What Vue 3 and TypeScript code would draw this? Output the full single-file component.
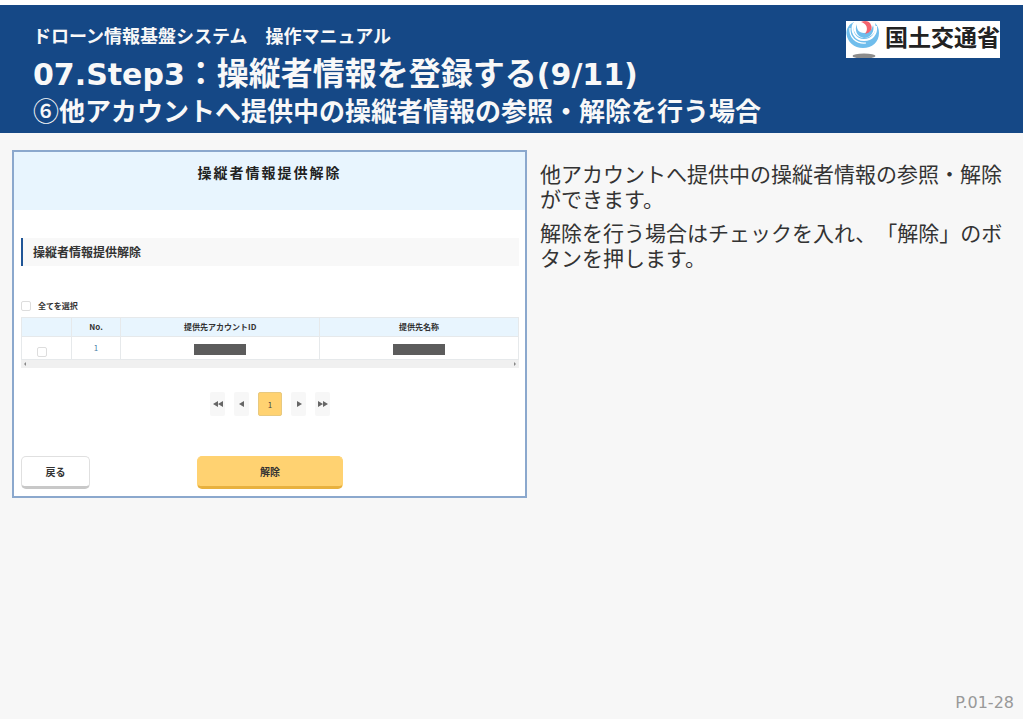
<script setup lang="ts">
import { computed, ref } from 'vue'

interface Recipient {
  no: number
  selected: boolean
}

const recipients = ref<Recipient[]>([{ no: 1, selected: false }])

const allSelected = computed<boolean>({
  get: () => recipients.value.every((r) => r.selected),
  set: (value) => recipients.value.forEach((r) => (r.selected = value)),
})
</script>

<template>
  <div class="slide">
    <header class="banner">
      <div class="headings">
        <p class="manual">ドローン情報基盤システム　操作マニュアル</p>
        <h1><span class="latin">07.Step3</span>：操縦者情報を登録する<span class="latin">(9/11)</span></h1>
        <h2><span class="num">⑥</span>他アカウントへ提供中の操縦者情報の参照・解除を行う場合</h2>
      </div>
      <div class="logo">
        <svg class="mark" viewBox="0 0 34 37" aria-hidden="true">
          <ellipse cx="18" cy="35" rx="11.5" ry="2.6" fill="#8c8c8c" />
          <path d="M8 1C3 3 0 8 0.5 13C1.5 21 8 27 17 27C26 27 33 21 33 12C33 8 32 5 29 2C31 9 28 15 20 17C11 18 5 10 8 1Z" fill="#6fbdec" />
          <path d="M11 3C8 9 11 16 18 17C25 17 29 10 27 4C26 9 23 12 18 12C13 12 10 8 11 3Z" fill="#6fbdec" />
          <path d="M8 2C4 10 9 19 18 19C26 19 31 13 30 5" fill="none" stroke="#fff" stroke-width="2" />
          <path d="M4 7C3 16 10 23 20 22" fill="none" stroke="#fff" stroke-width="1.2" />
          <path d="M15 1C19 -1 24 0 25 4C27 8 24 12 19 13C22 9 22 3 15 1Z" fill="#f3636e" />
        </svg>
        <span class="ministry">国土交通省</span>
      </div>
    </header>

    <main class="content">
      <section class="panel">
        <div class="panel-head"><h3>操縦者情報提供解除</h3></div>
        <div class="panel-body">
          <h4>操縦者情報提供解除</h4>
          <label class="select-all"><input v-model="allSelected" type="checkbox" />全てを選択</label>
          <table>
            <colgroup>
              <col class="narrow" />
              <col class="narrow" />
              <col class="wide" />
              <col class="wide" />
            </colgroup>
            <thead>
              <tr>
                <th></th>
                <th>No.</th>
                <th>提供先アカウントID</th>
                <th>提供先名称</th>
              </tr>
            </thead>
            <tbody>
              <tr v-for="r in recipients" :key="r.no">
                <td class="pick"><input v-model="r.selected" type="checkbox" :aria-label="`No. ${r.no}`" /></td>
                <td class="index">{{ r.no }}</td>
                <td><span class="masked"></span></td>
                <td><span class="masked"></span></td>
              </tr>
            </tbody>
          </table>
          <div class="scrollbar" aria-hidden="true">
            <svg viewBox="0 0 4 4"><path d="M3 0V4L1 2Z" /></svg>
            <svg viewBox="0 0 4 4"><path d="M1 0V4L3 2Z" /></svg>
          </div>
          <nav class="pager">
            <button type="button" aria-label="最初"><svg viewBox="0 0 10 6"><path d="M5 0V6L0 3ZM10 0V6L5 3Z" /></svg></button>
            <button type="button" aria-label="前へ"><svg viewBox="0 0 10 6"><path d="M7 0V6L2 3Z" /></svg></button>
            <button type="button" class="current">1</button>
            <button type="button" aria-label="次へ"><svg viewBox="0 0 10 6"><path d="M3 0V6L8 3Z" /></svg></button>
            <button type="button" aria-label="最後"><svg viewBox="0 0 10 6"><path d="M0 0V6L5 3ZM5 0V6L10 3Z" /></svg></button>
          </nav>
          <div class="actions">
            <button type="button" class="back">戻る</button>
            <button type="button" class="release">解除</button>
          </div>
        </div>
      </section>

      <section class="notes">
        <p>他アカウントへ提供中の操縦者情報の参照・解除ができます。</p>
        <p>解除を行う場合はチェックを入れ、「解除」のボタンを押します。</p>
      </section>
    </main>

    <footer>P.01-28</footer>
  </div>
</template>

<style>
body {
  margin: 0;
  background: #fff;
}
</style>

<style scoped>
.slide {
  box-sizing: border-box;
  min-height: 100vh;
  display: flex;
  flex-direction: column;
  border: solid #fff;
  border-width: 5px 1px 5px 0;
  background: #f7f7f7;
  color: #333;
  font-family: "Noto Sans CJK JP", sans-serif;
  text-spacing-trim: space-all;
}
h1, h2, h3, h4, p { margin: 0; }
button, input { margin: 0; padding: 0; font-family: inherit; }

.banner {
  display: flex;
  justify-content: space-between;
  align-items: flex-start;
  padding: 16px 23px 6px 33px;
  background: #154886;
  color: #f8f8f8;
}
.manual { font-size: 18px; line-height: 28px; font-weight: 700; }
h1 { font-size: 32px; line-height: 44px; font-weight: 700; }
.latin { font-family: "DejaVu Sans", sans-serif; font-size: 30px; line-height: 1; }
h2 { font-size: 26px; line-height: 34px; font-weight: 700; }
.num { font-weight: 500; }
.logo {
  display: flex;
  align-items: flex-start;
  gap: 5px;
  height: 37px;
  background: #fff;
  color: #222;
  white-space: nowrap;
}
.ministry { font-size: 23px; line-height: 30px; font-weight: 700; }
.mark { width: 34px; height: 37px; }

.content {
  display: grid;
  grid-template-columns: 515fr 464fr;
  gap: 13px;
  align-items: start;
  padding: 17px 19px 0 12px;
}
.panel {
  border: 2px solid #8ba8cd;
  background: #fff;
}
.panel-head {
  padding: 8px 0 26px;
  background: #e8f5fe;
  text-align: center;
}
h3 { color: #222; font-size: 14px; line-height: 24px; font-weight: 700; letter-spacing: 2px; }
.panel-body { padding: 28px 6px 7px 7px; }
h4 {
  padding-left: 10px;
  border-left: 2px solid #1f5596;
  background: #f8f8f8;
  color: #333;
  font-size: 12px;
  line-height: 28px;
  font-weight: 700;
}
.select-all {
  display: flex;
  align-items: center;
  gap: 7px;
  margin-top: 34px;
  font-size: 8px;
  line-height: 12px;
  font-weight: 700;
}
input[type="checkbox"] {
  appearance: none;
  box-sizing: border-box;
  width: 10px;
  height: 10px;
  border: 1px solid #ddd;
  border-radius: 2px;
  background: #fff;
}
input[type="checkbox"]:checked { background: #1f5596; }
table {
  width: 100%;
  margin-top: 5px;
  table-layout: fixed;
  border-collapse: collapse;
  font-size: 8px;
  line-height: 12px;
}
.narrow { width: 10%; }
.wide { width: 40%; }
th, td { border: 1px solid #e6e9eb; padding: 0; text-align: center; }
th { height: 18px; background: #e8f5fe; font-weight: 700; }
td { height: 22px; vertical-align: middle; }
.pick { padding-right: 8px; }
.pick input { display: block; margin: 8px auto 0; }
.index { color: #4a7da6; }
.masked {
  display: block;
  width: 52px;
  height: 11px;
  margin: 2px auto 0;
  background: #5c5c5c;
}
.scrollbar {
  display: flex;
  justify-content: space-between;
  align-items: center;
  height: 8px;
  padding: 0 2px;
  background: #f0f0f0;
}
.scrollbar svg { width: 4px; height: 4px; fill: #888; }
.pager {
  display: flex;
  justify-content: center;
  gap: 9px;
  margin-top: 24px;
}
.pager button {
  display: flex;
  align-items: center;
  justify-content: center;
  width: 15px;
  height: 24px;
  border: 0;
  border-radius: 2px;
  background: #f7f7f7;
}
.pager svg { width: 10px; height: 6px; fill: #666; }
.pager .current {
  width: 24px;
  border: 1px solid #e8c97f;
  background: #ffd271;
  color: #444;
  font-size: 8px;
}
.actions {
  display: grid;
  grid-template-columns: 1fr auto 1fr;
  margin-top: 40px;
}
.actions button {
  height: 33px;
  border: 1px solid #e0e0e0;
  border-bottom: 3px solid #c8c8c8;
  border-radius: 5px;
  background: #fff;
  color: #333;
  font-size: 10px;
  line-height: 16px;
  font-weight: 700;
}
.actions .back { width: 69px; }
.actions .release {
  width: 146px;
  border-color: #ffd271 #ffd271 #e8b13e;
  background: #ffd271;
}

.notes { padding-top: 11px; font-size: 21px; line-height: 25px; }
.notes p + p { margin-top: 9px; }

footer {
  margin-top: auto;
  padding: 0 9px 6px;
  color: #999;
  font-family: "DejaVu Sans", sans-serif;
  font-size: 16px;
  line-height: 20px;
  text-align: right;
}
</style>
